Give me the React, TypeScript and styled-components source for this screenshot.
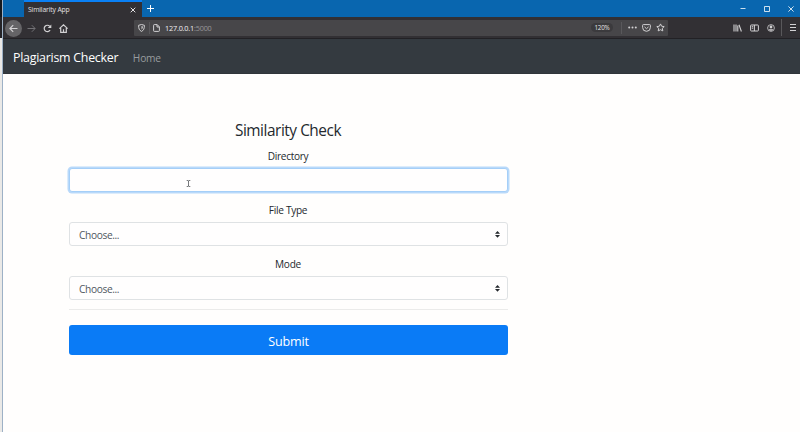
import React from "react";
import styled, { createGlobalStyle } from "styled-components";

const GlobalStyle = createGlobalStyle`
  *, *::before, *::after { box-sizing: border-box; }
  body { margin: 0; overflow: hidden; font-family: "Open Sans", "Noto Sans", sans-serif; }
`;

const Desktop = styled.div`
  display: flex;
  width: 800px;
  height: 432px;
`;

const WindowEdge = styled.div`
  flex: 0 0 3px;
  border-right: 1px solid #9db1c6;
  background: linear-gradient(#15181d 0 17px, #242327 17px 38px, #eae9e7 38px);
`;

const BrowserWindow = styled.div`
  flex: 1;
  display: flex;
  flex-direction: column;
  min-width: 0;
`;

const TabStrip = styled.div`
  display: flex;
  height: 17px;
  padding-left: 21px;
  background: #0966af;
  color: #fff;
`;

const Tab = styled.div`
  display: flex;
  align-items: center;
  justify-content: space-between;
  width: 118px;
  padding: 1px 6px 0 4px;
  border-top: 2px solid #0a80f5;
  background: #323034;
  color: #e2e1e3;
`;

const Text = styled.span<{ $size: number; $track?: number; $color?: string }>`
  display: block;
  white-space: nowrap;
  line-height: 1;
  font-size: ${(p) => p.$size}px;
  letter-spacing: ${(p) => p.$track ?? 0}px;
  color: ${(p) => p.$color ?? "inherit"};
`;

const Icon = styled.svg<{ $w: number; $h?: number }>`
  display: block;
  flex: none;
  width: ${(p) => p.$w}px;
  height: ${(p) => p.$h ?? p.$w}px;
  fill: none;
  stroke: currentColor;
  stroke-width: 1;
`;

const NewTab = styled.div`
  padding: 5px 0 0 5px;
`;

const WindowControls = styled.div`
  display: flex;
  align-items: center;
  gap: 18px;
  margin-left: auto;
  padding-right: 6px;
`;

const Toolbar = styled.div`
  display: flex;
  align-items: center;
  height: 22px;
  border-bottom: 1px solid #222125;
  background: #323034;
  color: #d2d1d3;
`;

const NavButtons = styled.div`
  display: flex;
  align-items: center;
  gap: 7px;
  width: 131px;
  padding: 1px 0 0 2px;
`;

const BackButton = styled.div`
  display: grid;
  place-items: center;
  width: 17px;
  height: 17px;
  margin-right: -2px;
  border-radius: 50%;
  background: #656467;
`;

const Dim = styled.span<{ $color: string }>`
  color: ${(p) => p.$color};
`;

const AddressBar = styled.div`
  display: flex;
  align-items: center;
  width: 534px;
  height: 16px;
  padding: 0 3px 0 4px;
  border-radius: 1px;
  background: #474649;
`;

const Divider = styled.div<{ $m: string; $h: number }>`
  width: 1px;
  height: ${(p) => p.$h}px;
  margin: ${(p) => p.$m};
  background: #59585b;
`;

const AddressText = styled.div`
  flex: 1;
  padding: 2px 0 0 5px;
`;

const Zoom = styled.div`
  display: grid;
  place-items: center;
  width: 22px;
  height: 9px;
  margin-right: 1px;
  padding-top: 1px;
  border-radius: 5px;
  background: #3b3a3d;
`;

const AddressActions = styled.div`
  display: flex;
  align-items: center;
  gap: 5px;
`;

const ToolActions = styled.div`
  display: flex;
  align-items: center;
  gap: 8px;
  margin-left: auto;
`;

const MenuButton = styled.div`
  display: flex;
  align-items: center;
  padding-right: 4px;
`;

const Navbar = styled.nav`
  display: flex;
  align-items: center;
  gap: 14.5px;
  height: 35px;
  padding: 4px 0 0 10px;
  background: #343a40;
  border-bottom: 1px solid #30353a;
`;

const Page = styled.main`
  position: relative;
  flex: 1;
  padding: 47px 0 0 66px;
  background: #fffefd;
`;

const Form = styled.form`
  display: flex;
  flex-direction: column;
  width: 439px;
  color: #24292e;
`;

const Caption = styled.div<{ $h: number; $drop?: number; $lift?: number }>`
  display: flex;
  align-items: center;
  justify-content: center;
  height: ${(p) => p.$h}px;
  padding: ${(p) => p.$drop ?? 0}px 1px ${(p) => p.$lift ?? 0}px 0;
`;

const Field = styled.div<{ $focused?: boolean }>`
  display: flex;
  align-items: center;
  justify-content: space-between;
  height: 24px;
  margin-bottom: 8px;
  padding: 0 7px 0 9px;
  border: 1px solid ${(p) => (p.$focused ? "#a5cff8" : "#dfe2e4")};
  border-radius: 3px;
  background: #fffefe;
  box-shadow: ${(p) => (p.$focused ? "0 0 0 1.5px #b9d9fa" : "none")};
`;

const Choice = styled.div`
  padding-top: 2px;
`;

const Rule = styled.div`
  height: 1px;
  margin-top: 1px;
  background: #ebebea;
`;

const Submit = styled.div`
  display: grid;
  place-items: center;
  height: 30px;
  margin-top: 15px;
  padding: 4px 0 0;
  border-radius: 3px;
  background: #0a7bf6;
  color: #fff;
`;

const Pointer = styled.div`
  position: absolute;
  left: 182.5px;
  top: 106px;
  color: #55585c;
`;

const SelectArrows = () => (
  <Icon $w={5} $h={7} viewBox="0 0 5 7">
    <path d="M0 2.8 2.5 0 5 2.8ZM0 3.9 2.5 6.7 5 3.9Z" fill="#24282d" stroke="none" />
  </Icon>
);

const Select = () => (
  <Field>
    <Choice>
      <Text $size={10.2} $track={-0.38} $color="#50575e">Choose...</Text>
    </Choice>
    <SelectArrows />
  </Field>
);

export default function App() {
  return (
    <Desktop>
      <GlobalStyle />
      <WindowEdge />
      <BrowserWindow>
        <TabStrip>
          <Tab>
            <Text $size={6.8} $track={-0.15}>Similarity App</Text>
            <Icon $w={6} viewBox="0 0 6 6"><path d="M.7.7 5.3 5.3M5.3.7.7 5.3" /></Icon>
          </Tab>
          <NewTab><Icon $w={7} viewBox="0 0 7 7"><path d="M3.5 0V7M0 3.5H7" /></Icon></NewTab>
          <WindowControls>
            <Icon $w={6} viewBox="0 0 6 6"><path d="M.5 2.5H5.5" strokeWidth=".8" /></Icon>
            <Icon $w={6} viewBox="0 0 6 6"><path d="M.5.5H5.5V5.5H.5Z" strokeWidth=".8" /></Icon>
            <Icon $w={6} viewBox="0 0 6 6"><path d="M.4.4 5.6 5.6M5.6.4.4 5.6" strokeWidth=".8" /></Icon>
          </WindowControls>
        </TabStrip>

        <Toolbar>
          <NavButtons>
            <BackButton>
              <Icon $w={9} viewBox="0 0 9 9"><path d="M8.5 4.5H1M4.2 1.2.9 4.5 4.2 7.8" strokeWidth="1.2" /></Icon>
            </BackButton>
            <Dim $color="#737276">
              <Icon $w={9} viewBox="0 0 9 9"><path d="M.5 4.5H8M4.8 1.2 8.1 4.5 4.8 7.8" /></Icon>
            </Dim>
            <Icon $w={9} viewBox="0 0 9 9">
              <path d="M7.1 6.2A3.2 3.2 0 1 1 6.8 2.3" strokeWidth="1.2" />
              <path d="M8.3.4V4H4.7Z" fill="currentColor" stroke="none" />
            </Icon>
            <Icon $w={9} viewBox="0 0 9 9"><path d="M.4 4.6 4.5.8 8.6 4.6M1.7 4V8.3H7.3V4M4.5 8V5.2" strokeWidth="1.2" /></Icon>
          </NavButtons>

          <AddressBar>
            <Icon $w={7} $h={8} viewBox="0 0 7 8">
              <path d="M3.5.5 6.4 1.3C6.4 4.7 5.7 6.3 3.5 7.4 1.3 6.3.6 4.7.6 1.3Z" />
              <path d="M3.5 2.1V5.6C4.5 4.9 4.9 4 4.9 2.5Z" fill="currentColor" stroke="none" />
            </Icon>
            <Divider $m="0 3px 0 4px" $h={12} />
            <Icon $w={7} $h={8} viewBox="0 0 7 8"><path d="M.6 1.3Q.6.6 1.3.6H4.2L6.4 2.8V6.7Q6.4 7.4 5.7 7.4H1.3Q.6 7.4.6 6.7ZM4 .8V3H6.2" /></Icon>
            <AddressText>
              <Text $size={7.3} $track={-0.2} $color="#f0eff1">127.0.0.1<Dim $color="#97969a">:5000</Dim></Text>
            </AddressText>
            <Zoom><Text $size={6.3} $track={-0.2} $color="#e6e5e7">120%</Text></Zoom>
            <Divider $m="0 6px 0 7px" $h={12} />
            <AddressActions>
              <Icon $w={9} $h={3} viewBox="0 0 9 3">
                <g fill="currentColor" stroke="none"><circle cx="1.2" cy="1.5" r="1" /><circle cx="4.5" cy="1.5" r="1" /><circle cx="7.8" cy="1.5" r="1" /></g>
              </Icon>
              <Icon $w={9} $h={8} viewBox="0 0 9 8"><path d="M1.3.6H7.7Q8.4.6 8.4 1.3V3.4A3.9 3.9 0 0 1 .6 3.4V1.3Q.6.6 1.3.6ZM2.5 2.9 4.5 4.7 6.5 2.9" /></Icon>
              <Icon $w={9} viewBox="0 0 9 9"><path d="M4.5.9 5.6 3.2 8.2 3.6 6.3 5.3 6.8 7.9 4.5 6.7 2.2 7.9 2.7 5.3.8 3.6 3.4 3.2Z" /></Icon>
            </AddressActions>
          </AddressBar>

          <ToolActions>
            <Icon $w={9} $h={8} viewBox="0 0 9 8"><path d="M1 .5V7.5M3 .5V7.5M4.8 1.5V7.5M6 .7 8.4 7.5" strokeWidth="1.1" /></Icon>
            <Icon $w={9} $h={8} viewBox="0 0 9 8"><path d="M1.3 1H7.7Q8.4 1 8.4 1.7V6.3Q8.4 7 7.7 7H1.3Q.6 7 .6 6.3V1.7Q.6 1 1.3 1ZM4.4 1V7M1.8 2.7H3.2M1.8 4.2H3.2" /></Icon>
            <Icon $w={8} viewBox="0 0 8 8">
              <circle cx="4" cy="4" r="3.4" strokeWidth=".8" />
              <circle cx="4" cy="3" r="1.4" fill="currentColor" stroke="none" />
              <path d="M1.7 5.3H6.3Q5.5 6.8 4 6.8T1.7 5.3Z" fill="currentColor" stroke="none" />
            </Icon>
            <MenuButton>
              <Divider $m="0 8px 0 -2px" $h={17} />
              <Icon $w={6} $h={7} viewBox="0 0 6 7"><path d="M0 .5H6M0 3.5H6M0 6.5H6" /></Icon>
            </MenuButton>
          </ToolActions>
        </Toolbar>

        <Navbar>
          <Text $size={12.4} $track={-0.25} $color="#fff">Plagiarism Checker</Text>
          <Text $size={10.2} $track={-0.2} $color="#989c9f">Home</Text>
        </Navbar>

        <Page>
          <Form>
            <Caption $h={18} $drop={1}><Text $size={15.4} $track={-0.46}>Similarity Check</Text></Caption>
            <Caption $h={29} $drop={5}><Text $size={10.1} $track={-0.3}>Directory</Text></Caption>
            <Field $focused />
            <Caption $h={22} $lift={2}><Text $size={10.1} $track={-0.3}>File Type</Text></Caption>
            <Select />
            <Caption $h={22} $lift={2}><Text $size={10.1} $track={-0.3}>Mode</Text></Caption>
            <Select />
            <Rule />
            <Submit><Text $size={12.6} $track={-0.2}>Submit</Text></Submit>
          </Form>
          <Pointer>
            <Icon $w={5} $h={7} viewBox="0 0 5 7"><path d="M.7.5H2L2.5.9 3 .5H4.3M2.5.9V6.1M.7 6.5H2L2.5 6.1 3 6.5H4.3" strokeWidth=".8" /></Icon>
          </Pointer>
        </Page>
      </BrowserWindow>
    </Desktop>
  );
}
